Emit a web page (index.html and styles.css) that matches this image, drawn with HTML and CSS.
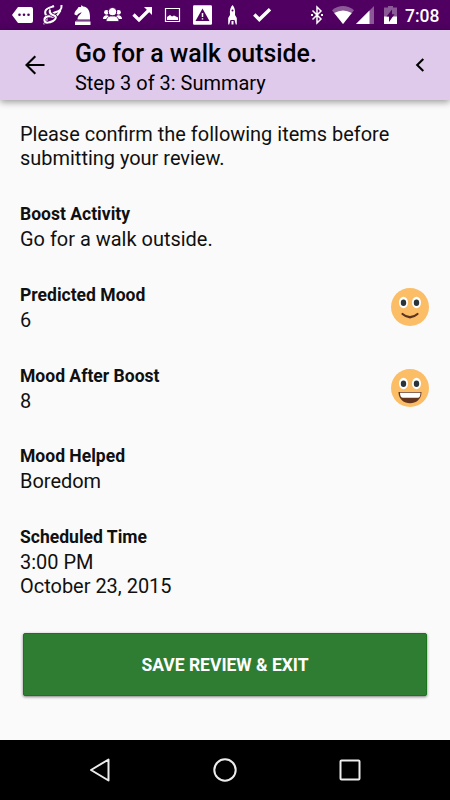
FILE: index.html
```html
<!DOCTYPE html>
<html lang="en">
<head>
<meta charset="utf-8">
<title>Go for a walk outside.</title>
<link rel="stylesheet" href="styles.css">
</head>
<body>
<div class="status">
  <div class="notifications">
    <svg class="icon" viewBox="0 0 30 30"><path d="M11 7h13q2 0 2 2v12q0 2-2 2H11L5 15z"/><g fill="#4f0060"><circle cx="12.500" cy="14.700" r="1.300"/><circle cx="17" cy="14.700" r="1.300"/><circle cx="21.500" cy="14.700" r="1.300"/></g></svg>
    <svg class="icon line" viewBox="0 0 30 30"><g stroke-width="2"><path d="M24.500 5c.5 5-2 6-5.500 7s-5 4-8 4-4-5-1-7 5-2 7-3"/><path d="M6.500 23.500c2.500 0 3.500-2 3-4s2-4 5-3 5 0 7-3 2-3 2-3" /><path d="M13 9.500c-1 3 1 5 4 6s2 4-1 5.500-8 3-8.500-.5 3-4.500 6-4" stroke="#4f0060" stroke-width="3.600"/><path d="M13 9.500c-1 3 1 5 4 6s2 4-1 5.500-8 3-8.500-.5 3-4.500 6-4"/></g></svg>
    <svg class="icon" viewBox="0 0 30 30"><path d="M14.500 5l1.500 1.500c5 .5 7.500 4.500 7 13H10.500c0-4 3.500-5 4-7.500-2 1.500-3.500 1.500-4.500 3.500l-2.500-1c-.5-3 3-5 4-7.500L14 7zM8 21.500h15.500V25H8z"/><path d="M9 20.800h14" stroke="#fff" stroke-width=".6" opacity=".6"/></svg>
    <svg class="icon" viewBox="0 0 30 30"><circle cx="9.500" cy="12.300" r="2.400"/><circle cx="21.500" cy="12.300" r="2.400"/><path d="M6 19c0-5 7-5 7 0zM18 19c0-5 7-5 7 0z"/><circle cx="15.500" cy="11.700" r="4.200" stroke="#4f0060"/><path d="M9 21.500c0-3 2-5 4-5.500h5c2 .5 4 2.500 4 5.500z" stroke="#4f0060" stroke-width=".8"/></svg>
    <svg class="icon line" viewBox="0 0 30 30"><path d="M6.500 14.500l5.500 5.500L23 9" stroke-width="3.200"/><path d="M17 7h8v8z" fill="#fff" stroke="none"/></svg>
    <svg class="icon" viewBox="0 0 30 30"><path d="M8.500 8.500h14v13h-14z" fill="none" stroke="#fff" stroke-width="1.200"/><path d="M10 20v-3l3-2 2 1.500 2-1 4 2V20z"/></svg>
    <svg class="icon" viewBox="0 0 30 30"><rect x="6" y="5.300" width="19" height="19.400" rx="1.200"/><path d="M15.500 8.500L22.500 21h-14z" fill="#4f0060"/><path d="M15.500 13v4M15.500 18.200v1.400" stroke="#fff" stroke-width="1.500"/></svg>
    <svg class="icon" viewBox="0 0 30 30"><path d="M15.500 5c2 2 3 5 2.500 10l1.800 3v6.500h-1L17.500 20h-4l-1.300 4.500h-1V18l1.800-3C12.500 10 13.500 7 15.500 5zM14.500 21h2v3.500h-2z"/><circle cx="15.500" cy="10.500" r="1" fill="#4f0060"/></svg>
    <svg class="icon line" viewBox="0 0 30 30"><path d="M7.300 14.500l5 5L23 9.300" stroke-width="3.400"/></svg>
  </div>
  <div class="system">
    <svg class="bluetooth" viewBox="0 0 12 30"><path d="M1.500 10.500l8.500 8.500-4 4V7l4 4-8.500 8.500" fill="none" stroke="#fff" stroke-width="1.500"/><path d="M0 14h2v2H0zM10 14h2v2h-2z"/></svg>
    <svg class="wifi" viewBox="0 0 22 30"><path d="M0 10.200Q11 2 22 10.200L11 24z" opacity=".35"/><path d="M2.200 13Q11 8 19.800 13L11 24z"/></svg>
    <svg class="signal" viewBox="0 0 18 30"><path d="M18 6v18H0z" opacity=".35"/><path d="M13.500 10.500V24H0z"/></svg>
    <svg class="battery" viewBox="0 0 13 30"><path d="M0 7.500h4V6h5v1.500h4V24H0z" opacity=".35"/><path d="M0 16.500h13V24H0z"/><path d="M8 9.500v4.800h2.500L5 22v-5.500H2.500z" fill="#4f0060"/></svg>
    <span class="clock">7:08</span>
  </div>
</div>
<header class="appbar">
  <svg class="back" viewBox="0 0 20 20"><path d="M19.500 10H1.800M10.300 1.300L1.500 10l8.800 8.700" fill="none" stroke="#000" stroke-width="2.100"/></svg>
  <div class="heading">
    <h1>Go for a walk outside.</h1>
    <p>Step 3 of 3: Summary</p>
  </div>
  <svg class="chevron" viewBox="0 0 10 14"><path d="M8.300 1L2.200 7l6.100 6" fill="none" stroke="#000" stroke-width="2.100"/></svg>
</header>
<main>
  <p class="intro">Please confirm the following items before submitting your review.</p>
  <section><h2>Boost Activity</h2><p>Go for a walk outside.</p></section>
  <section class="mood">
    <div><h2>Predicted Mood</h2><p>6</p></div>
    <svg class="face" viewBox="0 0 38 38"><circle cx="19" cy="19" r="19" fill="#fbbd66"/><g fill="#fff"><ellipse cx="12.500" cy="14.500" rx="4.500" ry="5.700"/><ellipse cx="25.500" cy="14.500" rx="4.500" ry="5.700"/></g><g fill="#29353a"><ellipse cx="12.500" cy="14.700" rx="2.700" ry="3.300"/><ellipse cx="25.500" cy="14.700" rx="2.700" ry="3.300"/></g><path d="M11.500 26q7.500 6.500 15 0" fill="none" stroke="#5e3420" stroke-width="2.200" stroke-linecap="round"/></svg>
  </section>
  <section class="mood">
    <div><h2>Mood After Boost</h2><p>8</p></div>
    <svg class="face" viewBox="0 0 38 38"><circle cx="19" cy="19" r="19" fill="#fbbd66"/><g fill="#fff"><ellipse cx="12.500" cy="14.500" rx="4.500" ry="5.700"/><ellipse cx="25.500" cy="14.500" rx="4.500" ry="5.700"/></g><g fill="#29353a"><ellipse cx="12.500" cy="14.700" rx="2.700" ry="3.300"/><ellipse cx="25.500" cy="14.700" rx="2.700" ry="3.300"/></g><path d="M7.500 23h23c0 15-23 15-23 0z" fill="#63351f"/><path d="M9 23.800h20.500c0 3-1 5-2.500 5H12c-2 0-3-2-3-5z" fill="#fff"/></svg>
  </section>
  <section><h2>Mood Helped</h2><p>Boredom</p></section>
  <section class="schedule"><h2>Scheduled Time</h2><p>3:00 PM<br>October 23, 2015</p></section>
  <button class="save">SAVE REVIEW &amp; EXIT</button>
</main>
<nav>
  <svg viewBox="0 0 26 26"><path d="M21.500 2.500v21L4 13z"/></svg>
  <svg viewBox="0 0 26 26"><circle cx="13" cy="13" r="10.700"/></svg>
  <svg viewBox="0 0 26 26"><rect x="3.500" y="3.500" width="19" height="19" rx="1"/></svg>
</nav>
</body>
</html>
```
FILE: styles.css
```css
* { box-sizing: border-box; }
body, h1, h2, p { margin: 0; }
body {
  width: 450px;
  height: 800px;
  display: flex;
  flex-direction: column;
  overflow: hidden;
  background: #fafafa;
  color: #101010;
  font: 19.970px/24px Roboto, sans-serif;
}
svg { display: block; flex: none; }
.status {
  height: 30px;
  flex: none;
  display: flex;
  justify-content: space-between;
  padding: 0 10px 0 7px;
  background: #4f0060;
  color: #fff;
  fill: #fff;
}
.notifications, .system { display: flex; }
.icon { width: 30px; height: 30px; }
.line { fill: none; stroke: #fff; }
.bluetooth { width: 12px; height: 30px; margin-right: 9px; }
.wifi { width: 22px; height: 30px; margin-right: 2px; }
.signal { width: 18px; height: 30px; margin-right: 10px; }
.battery { width: 13px; height: 30px; margin-right: 8px; }
.clock { width: 35px; font-size: 17.500px; font-weight: 500; line-height: 32px; white-space: nowrap; }
.appbar {
  height: 70px;
  flex: none;
  display: flex;
  align-items: center;
  padding: 0 25px;
  background: #e0caec;
  color: #000;
  box-shadow: 0 2px 7px rgba(0, 0, 0, .4);
}
.back { width: 20px; height: 20px; }
.heading { flex: 1; padding: 6px 0 0 30px; }
h1 { font-size: 24.900px; line-height: 30px; font-weight: 500; }
.heading p { line-height: 29px; }
.chevron { width: 10px; height: 14px; }
main {
  flex: 1;
  display: flex;
  flex-direction: column;
  padding: 22px 20px 0;
}
.intro { margin-bottom: 32px; }
section { height: 50px; margin-bottom: 30.800px; }
h2 { font-size: 17.550px; line-height: 24px; font-weight: 700; margin-bottom: 1px; }
.mood { display: flex; justify-content: space-between; }
.face { width: 38px; height: 38px; margin: 5px 1px 0 0; }
.schedule { height: 74px; margin-bottom: 33.800px; }
.save {
  height: 63px;
  margin: 0 3px;
  padding-top: 3px;
  border: 1px solid #18751d;
  border-radius: 2px;
  background: #2f7d33;
  color: #fff;
  font: 700 17.500px Roboto, sans-serif;
  box-shadow: 0 1px 3px rgba(0, 0, 0, .5);
}
nav {
  height: 60px;
  flex: none;
  display: flex;
  justify-content: center;
  align-items: center;
  gap: 99px;
  background: #000;
}
nav svg { width: 26px; height: 26px; fill: none; stroke: #ececec; stroke-width: 2; stroke-linejoin: round; }
```
